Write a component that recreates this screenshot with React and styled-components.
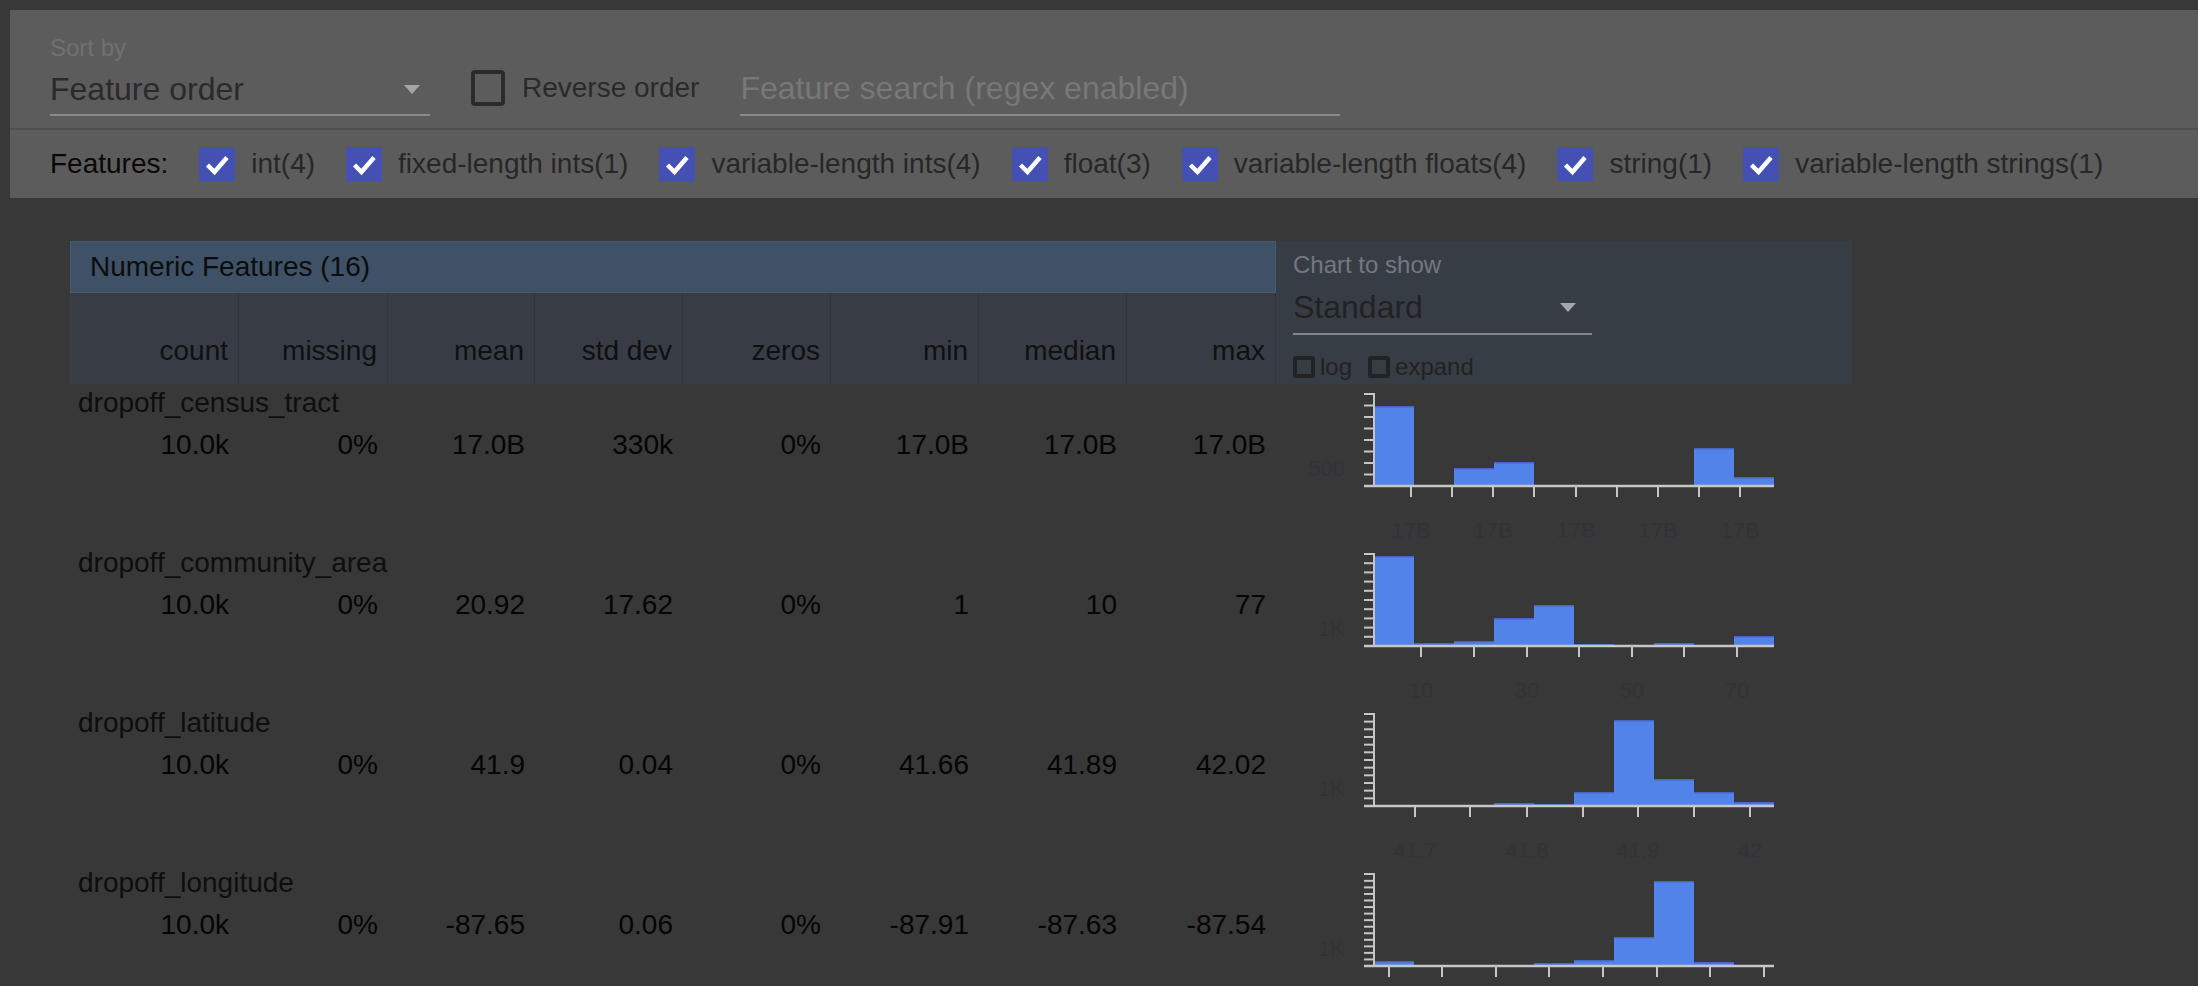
import React from 'react';
import styled, { createGlobalStyle } from 'styled-components';

const GlobalStyle = createGlobalStyle`
  body {
    margin: 0;
    background: #383838;
    font-family: 'Liberation Sans', Arial, sans-serif;
  }
`;

const COLS = '169px 149px 147px 148px 148px 148px 148px 149px';

const features = [
  { label: 'int(4)' },
  { label: 'fixed-length ints(1)' },
  { label: 'variable-length ints(4)' },
  { label: 'float(3)' },
  { label: 'variable-length floats(4)' },
  { label: 'string(1)' },
  { label: 'variable-length strings(1)' },
];

const columns = ['count', 'missing', 'mean', 'std dev', 'zeros', 'min', 'median', 'max'];

const rows = [
  {
    name: 'dropoff_census_tract',
    values: ['10.0k', '0%', '17.0B', '330k', '0%', '17.0B', '17.0B', '17.0B'],
    bins: [79, 0, 17, 23, 0, 0, 0, 0, 37, 8],
    step: 11.5,
    yLabel: '500',
    ticks: [135, 176, 217, 258, 300, 341, 382, 423, 464],
    labels: [[135, '17B'], [217, '17B'], [300, '17B'], [382, '17B'], [464, '17B']],
  },
  {
    name: 'dropoff_community_area',
    values: ['10.0k', '0%', '20.92', '17.62', '0%', '1', '10', '77'],
    bins: [89, 2, 4, 27, 40, 1, 0, 2, 0, 9],
    step: 9.2,
    yLabel: '1K',
    ticks: [145, 198, 251, 303, 356, 408, 461],
    labels: [[145, '10'], [251, '30'], [356, '50'], [461, '70']],
  },
  {
    name: 'dropoff_latitude',
    values: ['10.0k', '0%', '41.9', '0.04', '0%', '41.66', '41.89', '42.02'],
    bins: [0, 0, 0, 2, 1, 13, 85, 26, 13, 3],
    step: 7.67,
    yLabel: '1K',
    ticks: [139, 194, 251, 307, 362, 418, 474],
    labels: [[139, '41.7'], [251, '41.8'], [362, '41.9'], [474, '42']],
  },
  {
    name: 'dropoff_longitude',
    values: ['10.0k', '0%', '-87.65', '0.06', '0%', '-87.91', '-87.63', '-87.54'],
    bins: [4, 0, 0, 0, 2, 5, 28, 84, 3, 0],
    step: 6.55,
    yLabel: '1K',
    ticks: [113, 166, 220, 273, 327, 381, 434, 488],
    labels: [],
  },
];

const Histogram = ({ bins, step, yLabel, ticks, labels }) => {
  const axisY = 102;
  const yTicks = [10];
  for (let y = axisY; y > 14; y -= step) yTicks.push(y);
  return (
    <svg width="576" height="160" viewBox="0 0 576 160">
      {bins.map((h, i) =>
        h > 0 ? (
          <g key={i}>
            <rect x={98 + i * 40} y={axisY - 1 - h} width="40" height={h} fill="#5283e8" />
            <rect x={98 + i * 40} y={axisY - 1 - h} width="40" height="1.5" fill="#4668c4" />
          </g>
        ) : null
      )}
      {yTicks.map((y, i) => (
        <line key={i} x1="88" x2="98" y1={y} y2={y} stroke="#c6c6c6" strokeWidth="2" />
      ))}
      <line x1="98" x2="98" y1="9" y2="103" stroke="#c6c6c6" strokeWidth="2" />
      <line x1="88" x2="498" y1={axisY} y2={axisY} stroke="#c6c6c6" strokeWidth="2.5" />
      {ticks.map((x) => (
        <line key={x} x1={x} x2={x} y1={axisY} y2={axisY + 11} stroke="#c6c6c6" strokeWidth="2" />
      ))}
      <AxisText x="69" y="92" textAnchor="end">{yLabel}</AxisText>
      {labels.map(([x, t]) => (
        <AxisText key={x} x={x} y="154" textAnchor="middle">{t}</AxisText>
      ))}
    </svg>
  );
};

const Check = () => (
  <CheckBox>
    <svg width="36" height="35" viewBox="0 0 36 35">
      <path d="M8.5 18 L15.5 25 L28 10.5" fill="none" stroke="#fff" strokeWidth="4.5" />
    </svg>
  </CheckBox>
);

const App = () => {
  return (
    <>
      <GlobalStyle />
      <ControlPanel>
        <TopRow>
          <SortField>
            <FieldLabel>Sort by</FieldLabel>
            <SelectBox>
              Feature order
              <Arrow />
            </SelectBox>
          </SortField>
          <ReverseField>
            <EmptyBox />
            <ReverseLabel>Reverse order</ReverseLabel>
          </ReverseField>
          <SearchField>Feature search (regex enabled)</SearchField>
        </TopRow>
        <FeaturesRow>
          <FeaturesTitle>Features:</FeaturesTitle>
          {features.map((f) => (
            <CheckItem key={f.label}>
              <Check />
              <CheckLabel>{f.label}</CheckLabel>
            </CheckItem>
          ))}
        </FeaturesRow>
      </ControlPanel>

      <Main>
        <HeaderRow>
          <LeftHeader>
            <TitleBar>Numeric Features (16)</TitleBar>
            <ColumnRow>
              {columns.map((c) => (
                <HeaderCell key={c}>{c}</HeaderCell>
              ))}
            </ColumnRow>
          </LeftHeader>
          <ChartPanel>
            <ChartLabel>Chart to show</ChartLabel>
            <ChartSelect>
              Standard
              <Arrow $right={16} />
            </ChartSelect>
            <OptionRow>
              <OptionItem>
                <SmallBox />
                log
              </OptionItem>
              <OptionItem>
                <SmallBox />
                expand
              </OptionItem>
            </OptionRow>
          </ChartPanel>
        </HeaderRow>

        {rows.map((r) => (
          <DataRow key={r.name}>
            <Stats>
              <FeatureName>{r.name}</FeatureName>
              <ValuesGrid>
                {r.values.map((v, i) => (
                  <ValueCell key={i}>{v}</ValueCell>
                ))}
              </ValuesGrid>
            </Stats>
            <ChartCell>
              <Histogram {...r} />
            </ChartCell>
          </DataRow>
        ))}
      </Main>
    </>
  );
};

export default App;

// Styled Components

const ControlPanel = styled.div`
  margin: 10px 0 0 10px;
  background: #5c5c5c;
`;

const TopRow = styled.div`
  display: flex;
  align-items: flex-end;
  padding: 24px 0 12px 40px;
  border-bottom: 2px solid #4f4f4f;
`;

const SortField = styled.div`
  display: flex;
  flex-direction: column;
  width: 380px;
`;

const FieldLabel = styled.div`
  font-size: 24px;
  line-height: 28px;
  color: #717171;
  margin-bottom: 8px;
`;

const SelectBox = styled.div`
  display: flex;
  align-items: center;
  justify-content: space-between;
  height: 46px;
  box-sizing: border-box;
  padding-bottom: 6px;
  border-bottom: 2px solid #8a8a8a;
  font-size: 32px;
  color: #2a2a2a;
`;

const Arrow = styled.span`
  width: 0;
  height: 0;
  border-left: 8px solid transparent;
  border-right: 8px solid transparent;
  border-top: 9px solid #a6a6a6;
  margin-right: ${(p) => p.$right ?? 10}px;
`;

const ReverseField = styled.div`
  display: flex;
  align-items: center;
  gap: 17px;
  height: 48px;
  padding-bottom: 8px;
  box-sizing: border-box;
  margin-left: 41px;
`;

const EmptyBox = styled.span`
  width: 34px;
  height: 36px;
  box-sizing: border-box;
  border: 4px solid #2b2b2b;
  border-radius: 4px;
`;

const ReverseLabel = styled.span`
  font-size: 28px;
  color: #2a2a2a;
`;

const SearchField = styled.div`
  display: flex;
  align-items: center;
  width: 600px;
  height: 48px;
  box-sizing: border-box;
  padding-bottom: 6px;
  margin-left: 41px;
  border-bottom: 2px solid #8a8a8a;
  font-size: 32px;
  color: #787878;
`;

const FeaturesRow = styled.div`
  display: flex;
  align-items: center;
  gap: 31px;
  height: 68px;
  padding-left: 40px;
`;

const FeaturesTitle = styled.span`
  font-size: 28px;
  color: #080808;
`;

const CheckItem = styled.div`
  display: flex;
  align-items: center;
  gap: 16px;
`;

const CheckBox = styled.span`
  display: flex;
  width: 36px;
  height: 35px;
  border-radius: 3px;
  background: #4450b3;
`;

const CheckLabel = styled.span`
  font-size: 28px;
  color: #272727;
`;

const Main = styled.div`
  padding: 43px 0 0 70px;
`;

const HeaderRow = styled.div`
  display: flex;
`;

const LeftHeader = styled.div`
  width: 1206px;
`;

const TitleBar = styled.div`
  display: flex;
  align-items: center;
  height: 52px;
  box-sizing: border-box;
  padding-left: 19px;
  background: #3f5166;
  border: 1px solid #465a70;
  font-size: 28px;
  color: #0c0c0c;
`;

const ColumnRow = styled.div`
  display: grid;
  grid-template-columns: ${COLS};
  height: 91px;
  background: #383d45;
`;

const HeaderCell = styled.div`
  display: flex;
  align-items: flex-end;
  justify-content: flex-end;
  padding: 0 10px 17px 0;
  border-right: 1px solid #31353b;
  font-size: 28px;
  line-height: 32px;
  color: #101010;
`;

const ChartPanel = styled.div`
  width: 576px;
  height: 143px;
  box-sizing: border-box;
  padding: 10px 0 0 17px;
  background: #373d45;
`;

const ChartLabel = styled.div`
  font-size: 24px;
  line-height: 28px;
  color: #737880;
  margin-bottom: 8px;
`;

const ChartSelect = styled.div`
  display: flex;
  align-items: center;
  justify-content: space-between;
  width: 299px;
  height: 48px;
  box-sizing: border-box;
  padding-bottom: 6px;
  border-bottom: 2px solid #80858c;
  font-size: 32px;
  color: #222;
`;

const OptionRow = styled.div`
  display: flex;
  gap: 16px;
  margin-top: 20px;
`;

const OptionItem = styled.div`
  display: flex;
  align-items: center;
  gap: 5px;
  font-size: 24px;
  line-height: 24px;
  color: #222;
`;

const SmallBox = styled.span`
  width: 22px;
  height: 22px;
  box-sizing: border-box;
  border: 4px solid #232323;
  border-radius: 3px;
`;

const DataRow = styled.div`
  display: flex;
  height: 160px;
`;

const Stats = styled.div`
  width: 1206px;
`;

const FeatureName = styled.div`
  padding: 4px 0 0 8px;
  font-size: 28px;
  line-height: 30px;
  color: #0e0e0e;
`;

const ValuesGrid = styled.div`
  display: grid;
  grid-template-columns: ${COLS};
  margin-top: 11px;
`;

const ValueCell = styled.div`
  text-align: right;
  padding-right: 10px;
  font-size: 28px;
  line-height: 32px;
  color: #050505;
`;

const ChartCell = styled.div`
  width: 576px;
`;

const AxisText = styled.text`
  font-size: 22px;
  fill: #323339;
  font-family: 'Liberation Sans', Arial, sans-serif;
`;
